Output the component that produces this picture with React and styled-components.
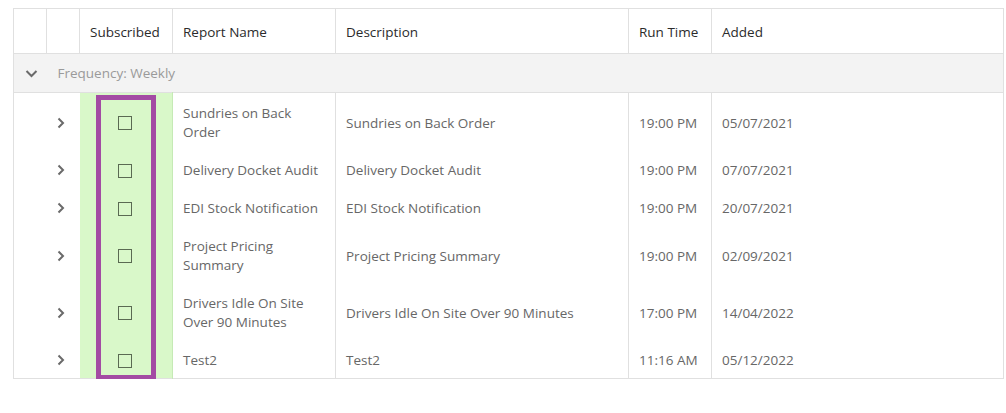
import React from "react";
import styled, { createGlobalStyle } from "styled-components";

const Global = createGlobalStyle`
  html, body { margin: 0; padding: 0; background: #fff; }
  body { font-family: "Open Sans", "Noto Sans", Arial, sans-serif; }
`;

const Page = styled.div`
  padding: 8px 2px 0 13px;
`;

const Frame = styled.div`
  position: relative;
  width: 991px;
`;

const Table = styled.table`
  width: 991px;
  table-layout: fixed;
  border-collapse: collapse;
  border: 1px solid #e0e0e0;
  font-size: 13.5px;
  line-height: 19px;
`;

const Th = styled.th`
  text-align: left;
  font-weight: 400;
  color: #2b2b2b;
  padding: 14px 10px 11px 10px;
  border-right: 1px solid #e0e0e0;
  border-bottom: 1px solid #e0e0e0;
  white-space: nowrap;
  &:last-child { border-right: none; }
`;

const GroupRow = styled.tr`
  background: #f3f3f3;
  border-bottom: 1px solid #e0e0e0;
`;

const GroupCell = styled.td`
  height: 37px;
  padding: 1px 0 0 11px;
  color: #9a9a9a;
`;

const GroupToggle = styled.td`
  height: 37px;
  padding: 1px 0 0 11px;
  vertical-align: middle;
`;

const Td = styled.td`
  padding: 11px 10px 8px 10px;
  color: #676767;
  vertical-align: middle;
  white-space: nowrap;
  border-right: ${(p) => (p.$divider ? "1px solid #e0e0e0" : "none")};
  &:last-child { border-right: none; }
`;

const ExpandCell = styled.td`
  padding: 2px 0 0 9px;
  vertical-align: middle;
`;

const SubCell = styled.td`
  background: #d9f8c9;
  border-right: 1px solid #c6eab6;
  padding: 2px 0 0 0;
  vertical-align: middle;
  text-align: center;
`;

const Box = styled.span`
  display: inline-block;
  width: 12px;
  height: 12px;
  border: 1px solid #5a6a52;
  vertical-align: middle;
  margin-left: -1px;
`;

const Highlight = styled.div`
  position: absolute;
  left: 83px;
  top: 87px;
  width: 60px;
  height: 285px;
  box-sizing: border-box;
  border: 5px solid #a34ba3;
  pointer-events: none;
`;

const Icon = styled.svg`
  display: block;
`;

const ChevronRight = () => (
  <Icon width="10" height="12" viewBox="0 0 10 12">
    <path d="M2.5 1.5 L7 6 L2.5 10.5" fill="none" stroke="#6a6a6a" strokeWidth="2" />
  </Icon>
);

const ChevronDown = () => (
  <Icon width="13" height="10" viewBox="0 0 13 10">
    <path d="M1.5 2 L6.5 7 L11.5 2" fill="none" stroke="#6a6a6a" strokeWidth="2" />
  </Icon>
);

const rows = [
  { name: ["Sundries on Back", "Order"], desc: "Sundries on Back Order", time: "19:00 PM", added: "05/07/2021" },
  { name: ["Delivery Docket Audit"], desc: "Delivery Docket Audit", time: "19:00 PM", added: "07/07/2021" },
  { name: ["EDI Stock Notification"], desc: "EDI Stock Notification", time: "19:00 PM", added: "20/07/2021" },
  { name: ["Project Pricing", "Summary"], desc: "Project Pricing Summary", time: "19:00 PM", added: "02/09/2021" },
  { name: ["Drivers Idle On Site", "Over 90 Minutes"], desc: "Drivers Idle On Site Over 90 Minutes", time: "17:00 PM", added: "14/04/2022" },
  { name: ["Test2"], desc: "Test2", time: "11:16 AM", added: "05/12/2022" },
];

export default function App() {
  return (
    <Page>
      <Global />
      <Frame>
        <Table>
          <colgroup>
            <col style={{ width: 33 }} />
            <col style={{ width: 33 }} />
            <col style={{ width: 93 }} />
            <col style={{ width: 163 }} />
            <col style={{ width: 293 }} />
            <col style={{ width: 83 }} />
            <col />
          </colgroup>
          <thead>
            <tr>
              <Th />
              <Th />
              <Th>Subscribed</Th>
              <Th>Report Name</Th>
              <Th>Description</Th>
              <Th>Run Time</Th>
              <Th>Added</Th>
            </tr>
          </thead>
          <tbody>
            <GroupRow>
              <GroupToggle>
                <ChevronDown />
              </GroupToggle>
              <GroupCell colSpan={6}>Frequency: Weekly</GroupCell>
            </GroupRow>
            {rows.map((r, i) => (
              <tr key={i}>
                <ExpandCell />
                <ExpandCell>
                  <ChevronRight />
                </ExpandCell>
                <SubCell>
                  <Box />
                </SubCell>
                <Td $divider>
                  {r.name.map((l, j) => (
                    <React.Fragment key={j}>
                      {j > 0 && <br />}
                      {l}
                    </React.Fragment>
                  ))}
                </Td>
                <Td $divider>{r.desc}</Td>
                <Td $divider>{r.time}</Td>
                <Td>{r.added}</Td>
              </tr>
            ))}
          </tbody>
        </Table>
        <Highlight />
      </Frame>
    </Page>
  );
}
